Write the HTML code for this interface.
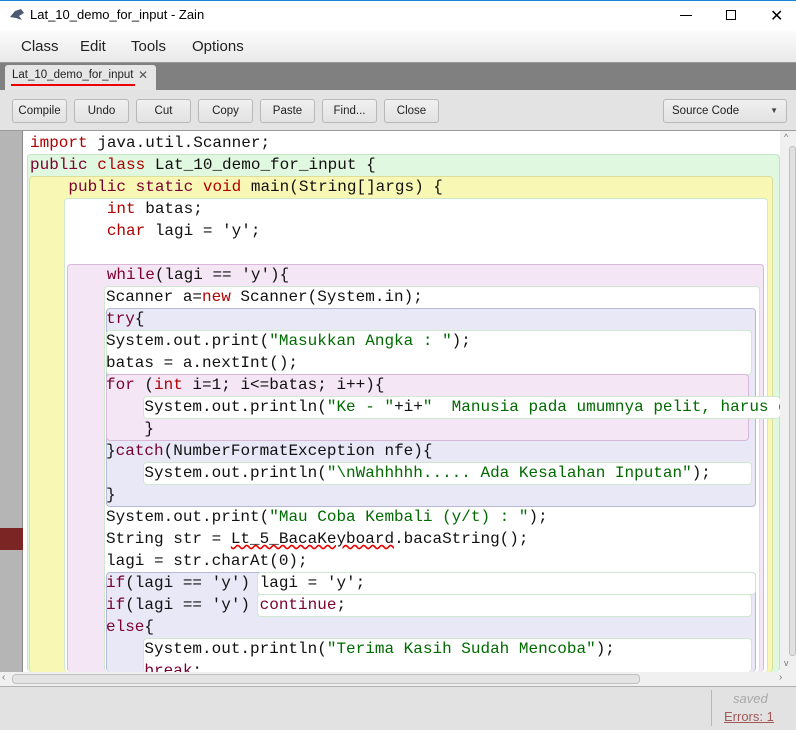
<!DOCTYPE html>
<html style="overflow:hidden;width:796px;height:730px"><head><meta charset="utf-8"><style>
*{margin:0;padding:0;box-sizing:border-box}
body{width:796px;height:730px;overflow:hidden;background:#fff;font-family:"Liberation Sans",sans-serif;position:relative}
.a{position:absolute}
.btn{position:absolute;top:99px;height:24px;width:55px;border:1px solid #b8b8b8;border-radius:3px;background:linear-gradient(#f0f0f0,#e2e2e2);font-size:11.5px;color:#222;text-align:center;line-height:22px}
.code{position:absolute;left:0;top:0;width:780px;height:541px;overflow:hidden;font-family:"Liberation Mono",monospace;font-size:16px;color:#111;white-space:pre}
.ln{position:absolute;height:22px;line-height:22px}
.k{color:#b00000}.p{color:#7a0030}.s{color:#006a00}
.blk{position:absolute;border:1px solid;border-radius:4px}
</style></head><body>
<div class="a" style="left:0;top:0;width:796px;height:1px;background:#1883d7"></div>
<div class="a" style="left:9px;top:8px;width:16px;height:14px">
<svg width="16" height="14"><path d="M1 9 L6 3 L12 1 L15 5 L10 8 L13 12 L7 10 Z" fill="#4a5a70"/></svg></div>
<div class="a" style="left:30px;top:7px;font-size:13px;color:#000">Lat_10_demo_for_input - Zain</div>
<div class="a" style="left:680px;top:15px;width:12px;height:1px;background:#000"></div>
<div class="a" style="left:726px;top:10px;width:10px;height:10px;border:1px solid #000"></div>
<div class="a" style="left:770px;top:6px;font-size:16px;color:#000">✕</div>
<div class="a" style="left:0;top:31px;width:796px;height:31px;background:linear-gradient(#fbfbfb,#e9e9e9)"></div>
<div class="a" style="left:21px;top:38px;font-size:15px;color:#222">Class</div>
<div class="a" style="left:80px;top:38px;font-size:15px;color:#222">Edit</div>
<div class="a" style="left:131px;top:38px;font-size:15px;color:#222">Tools</div>
<div class="a" style="left:192px;top:38px;font-size:15px;color:#222">Options</div>
<div class="a" style="left:0;top:62px;width:796px;height:28px;background:#808080;border-top:1px solid #999"></div>
<div class="a" style="left:5px;top:65px;width:151px;height:25px;background:#e6e6e6;border-radius:3px 3px 0 0"></div>
<div class="a" style="left:12px;top:69px;font-size:11.5px;color:#222">Lat_10_demo_for_input</div>
<div class="a" style="left:11px;top:84px;width:124px;height:2px;background:#e00"></div>
<div class="a" style="left:138px;top:68px;font-size:12px;color:#555">✕</div>
<div class="a" style="left:0;top:90px;width:796px;height:41px;background:#e3e3e3;border-bottom:1px solid #9a9a9a"></div>
<div class="btn" style="left:12px">Compile</div>
<div class="btn" style="left:74px">Undo</div>
<div class="btn" style="left:136px">Cut</div>
<div class="btn" style="left:198px">Copy</div>
<div class="btn" style="left:260px">Paste</div>
<div class="btn" style="left:322px">Find...</div>
<div class="btn" style="left:384px">Close</div>
<div class="btn" style="left:663px;width:124px;text-align:left;padding-left:8px">Source Code<span style="position:absolute;right:8px;top:0;font-size:8px;color:#444">▼</span></div>
<div class="a" style="left:0;top:131px;width:780px;height:541px;background:#fff;overflow:hidden">
 <div class="a" style="left:0;top:0;width:23px;height:541px;background:#b5b5b5;border-right:1px solid #8a8a8a"></div>
 <div class="a" style="left:0;top:397px;width:23px;height:22px;background:#7b2525"></div>
 <div class="blk" style="left:27px;top:23px;width:753px;height:518px;background:#e0f7e0;border-color:#c5e3c5;border-bottom:0"></div>
 <div class="blk" style="left:29px;top:45px;width:744px;height:496px;background:#f8f8b4;border-color:#dede9c;border-bottom:0"></div>
 <div class="blk" style="left:64px;top:67px;width:704px;height:474px;background:#fff;border-color:#d0e8d0;border-bottom:0"></div>
 <div class="blk" style="left:67px;top:133px;width:697px;height:408px;background:#f5e6f5;border-color:#d8b8d8;border-bottom:0"></div>
 <div class="blk" style="left:104px;top:155px;width:656px;height:386px;background:#fff;border-color:#d0e8d0;border-bottom:0"></div>
 <div class="blk" style="left:106px;top:177px;width:650px;height:199px;background:#e8e8f6;border-color:#b8b8d6"></div>
 <div class="blk" style="left:106px;top:199px;width:646px;height:45px;background:#fff;border-color:#d0e8d0"></div>
 <div class="blk" style="left:106px;top:243px;width:643px;height:67px;background:#f5e6f5;border-color:#d8b8d8"></div>
 <div class="blk" style="left:143px;top:265px;width:637px;height:23px;background:#fff;border-color:#d0e8d0;border-right:0"></div>
 <div class="blk" style="left:143px;top:331px;width:609px;height:23px;background:#fff;border-color:#d0e8d0"></div>
 <div class="blk" style="left:106px;top:441px;width:650px;height:100px;background:#e8e8f6;border-color:#b8b8d6;border-bottom:0"></div>
 <div class="blk" style="left:257px;top:441px;width:499px;height:23px;background:#fff;border-color:#d0e8d0"></div>
 <div class="blk" style="left:257px;top:463px;width:495px;height:23px;background:#fff;border-color:#d0e8d0"></div>
 <div class="blk" style="left:143px;top:507px;width:609px;height:34px;background:#fff;border-color:#d0e8d0;border-bottom:0"></div>
 <div class="code">
<div class="ln" style="left:30px;top:1px"><span class="k">import</span> java.util.Scanner;</div>
<div class="ln" style="left:30px;top:23px"><span class="p">public</span> <span class="k">class</span> Lat_10_demo_for_input {</div>
<div class="ln" style="left:30px;top:45px">    <span class="p">public</span> <span class="p">static</span> <span class="k">void</span> main(String[]args) {</div>
<div class="ln" style="left:30px;top:67px">        <span class="k">int</span> batas;</div>
<div class="ln" style="left:30px;top:89px">        <span class="k">char</span> lagi = 'y';</div>
<div class="ln" style="left:30px;top:133px">        <span class="p">while</span>(lagi == 'y'){</div>
<div class="ln" style="left:106px;top:155px">Scanner a=<span class="k">new</span> Scanner(System.in);</div>
<div class="ln" style="left:106px;top:177px"><span class="p">try</span>{</div>
<div class="ln" style="left:106px;top:199px">System.out.print(<span class="s">"Masukkan Angka : "</span>);</div>
<div class="ln" style="left:106px;top:221px">batas = a.nextInt();</div>
<div class="ln" style="left:106px;top:243px"><span class="p">for</span> (<span class="k">int</span> i=1; i&lt;=batas; i++){</div>
<div class="ln" style="left:106px;top:265px">    System.out.println(<span class="s">"Ke - "</span>+i+<span class="s">"  Manusia pada umumnya pelit, harus d</span></div>
<div class="ln" style="left:106px;top:287px">    }</div>
<div class="ln" style="left:106px;top:309px">}<span class="p">catch</span>(NumberFormatException nfe){</div>
<div class="ln" style="left:106px;top:331px">    System.out.println(<span class="s">"\nWahhhhh..... Ada Kesalahan Inputan"</span>);</div>
<div class="ln" style="left:106px;top:353px">}</div>
<div class="ln" style="left:106px;top:375px">System.out.print(<span class="s">"Mau Coba Kembali (y/t) : "</span>);</div>
<div class="ln" style="left:106px;top:397px">String str = <span style="text-decoration:underline wavy #e00">Lt_5_BacaKeyboard</span>.bacaString();</div>
<div class="ln" style="left:106px;top:419px">lagi = str.charAt(0);</div>
<div class="ln" style="left:106px;top:441px"><span class="p">if</span>(lagi == 'y') lagi = 'y';</div>
<div class="ln" style="left:106px;top:463px"><span class="p">if</span>(lagi == 'y') <span class="p">continue</span>;</div>
<div class="ln" style="left:106px;top:485px"><span class="p">else</span>{</div>
<div class="ln" style="left:106px;top:507px">    System.out.println(<span class="s">"Terima Kasih Sudah Mencoba"</span>);</div>
<div class="ln" style="left:106px;top:529px">    <span class="p">break</span>;</div>
 </div>
</div>
<div class="a" style="left:780px;top:131px;width:16px;height:541px;background:#f0f0f0"></div>
<div class="a" style="left:784px;top:132px;font-size:9px;color:#777">^</div>
<div class="a" style="left:789px;top:146px;width:7px;height:510px;background:#e0e0e0;border:1px solid #c0c0c0;border-radius:3px"></div>
<div class="a" style="left:784px;top:658px;font-size:9px;color:#777">v</div>
<div class="a" style="left:0;top:672px;width:796px;height:14px;background:#f0f0f0"></div>
<div class="a" style="left:2px;top:672px;font-size:10px;color:#777">‹</div>
<div class="a" style="left:12px;top:674px;width:628px;height:10px;background:#e4e4e4;border:1px solid #c0c0c0;border-radius:4px"></div>
<div class="a" style="left:779px;top:672px;font-size:10px;color:#777">›</div>
<div class="a" style="left:0;top:686px;width:796px;height:44px;background:#e2e2e2;border-top:1px solid #b0b0b0"></div>
<div class="a" style="left:711px;top:690px;width:1px;height:36px;background:#b8b8b8"></div>
<div class="a" style="left:733px;top:691px;font-size:13px;font-style:italic;color:#a8a8a8">saved</div>
<div class="a" style="left:724px;top:709px;font-size:13px;color:#a05858;text-decoration:underline">Errors: 1</div>
</body></html>
